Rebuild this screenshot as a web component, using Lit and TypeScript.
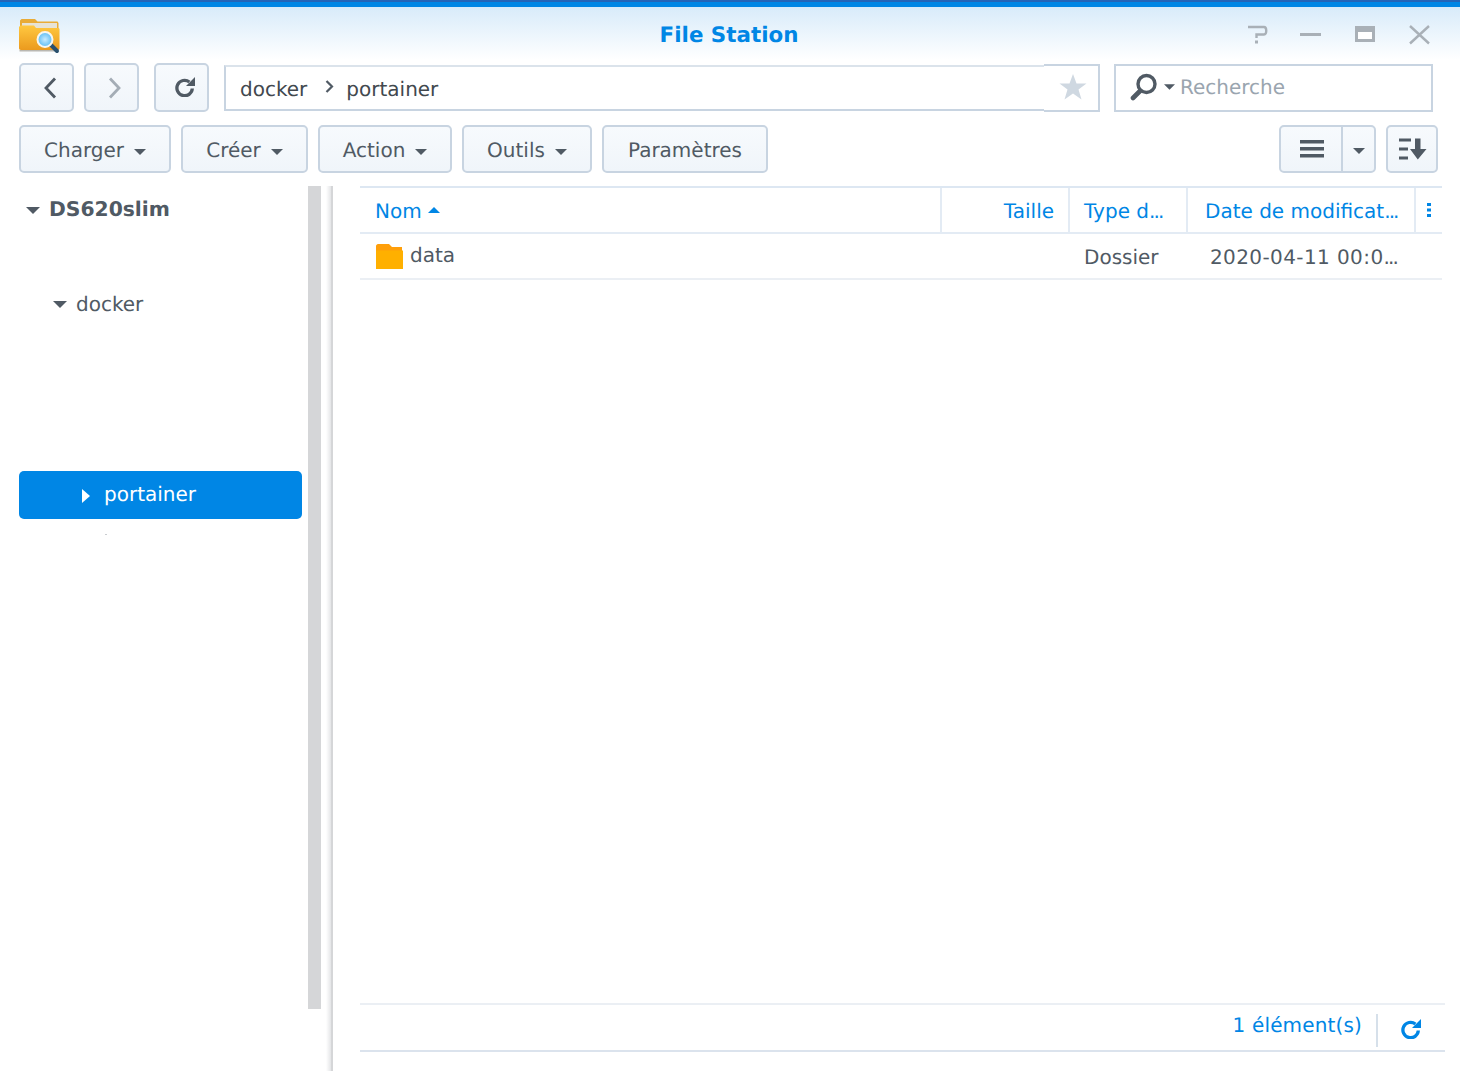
import { LitElement, html, css } from "lit";
import { customElement } from "lit/decorators.js";

const caret = () => html`<svg class="caret" width="12" height="6" viewBox="0 0 12 6"><path d="M0 0H12L6 6Z" fill="currentColor"/></svg>`;

const refresh = (color: string) => html`<svg width="20" height="20" viewBox="0 0 20 20" fill="none" style="color:${color}">
  <path d="M17.300 11.500A7.700 7.700 0 1 1 14.400 5" stroke="currentColor" stroke-width="3.300"/>
  <path d="M11 9H20V0Z" fill="currentColor"/>
</svg>`;

const dots = html`<span class="dots">...</span>`;

@customElement("app-root")
export class AppRoot extends LitElement {
  static styles = css`
    :host { display: block; width: 1460px; height: 1071px; overflow: hidden; background: #fff;
      font-family: "DejaVu Sans", sans-serif; font-size: 20px; color: #505a64; text-rendering: geometricPrecision; }
    * { box-sizing: border-box; }
    .dots { letter-spacing: -1.900px; margin-right: 2px; }
    .stripe { height: 7px; background: linear-gradient(#2565b8 0 2px, #0086e5 2px); }
    .head { background: linear-gradient(#d8ebfa, #ffffff 53px); background-repeat: no-repeat; }
    .title { height: 56px; position: relative; display: flex; justify-content: center; align-items: center;
      font-weight: 700; font-size: 21.400px; color: #0086e5; padding: 1px 2px 0 0; }
    .logo { position: absolute; left: 18px; top: 10px; }
    .winbtns { position: absolute; left: 1247px; top: 18px; display: flex; align-items: center; }
    .row { display: flex; align-items: center; padding-left: 19px; }
    .r1 { height: 49px; }
    .r2 { height: 48px; margin-top: 13px; padding-right: 22px; }
    .btn { height: 48px; background: linear-gradient(#f7fafd, #f0f5fa); border: 2px solid #c8d4e1; border-radius: 5px;
      display: flex; align-items: center; justify-content: center; color: #505a64; }
    .nav { width: 55px; height: 49px; margin-right: 10px; padding-left: 6px; }
    .nav.last { margin-left: 5px; margin-right: 15px; padding-left: 7px; padding-bottom: 1px; }
    .addr { width: 876px; height: 48px; display: flex; align-items: stretch; }
    .path { flex: 1; margin: 1px 0; border: 2px solid #c8d4e1; border-top-color: #dbe3eb; border-right: 0; background: #fff; padding-left: 14px;
      display: flex; align-items: center; color: #42484e; padding-top: 3px; }
    .path svg { margin: 0 12px 5px 18px; }
    .star { width: 56px; border: 2px solid #c8d4e1; border-left: 0; background: #fff; display: flex; align-items: center; justify-content: center; padding-left: 3px; padding-bottom: 1px; }
    .search { width: 319px; height: 48px; margin-left: 14px; border: 2px solid #c8d4e1; background: #fff;
      display: flex; align-items: center; padding: 0 0 2px 14px; color: #9aa5af; }
    .search .caret { color: #505a64; margin: 0 5px 0 6px; width: 11px; }
    .tb { padding: 2px 22px 0; gap: 10px; margin-right: 10px; white-space: nowrap; }
    .tb .caret { color: #505a64; margin-top: 3px; }
    .w-charger { width: 152px; }
    .w-creer { width: 127px; }
    .w-action { width: 134px; }
    .w-outils { width: 130px; }
    .w-param { width: 166px; }
    .spacer { flex: 1; }
    .split { width: 97px; margin-right: 10px; justify-content: flex-start; }
    .split .a { width: 62px; height: 100%; padding-left: 2px; display: flex; align-items: center; justify-content: center; border-right: 2px solid #c8d4e1; }
    .split .b { flex: 1; display: flex; align-items: center; justify-content: center; padding-top: 3px; }
    .sort { width: 52px; padding-left: 2px; }
    .main { display: flex; height: 885px; margin-top: 13px; }
    .side { width: 333px; display: flex; flex-shrink: 0; background: linear-gradient(90deg, #fff 326px, #e4e5e7 331px, #d5d6d8 331px); }
    .tree { width: 308px; padding-left: 19px; }
    .node { display: flex; align-items: center; height: 48px; }
    .node svg { flex-shrink: 0; }
    .n0 { padding: 0 0 2px 7px; font-weight: 700; height: 47px; }
    .n0 svg { margin-right: 9px; margin-top: 3px; width: 14px; height: 7px; }
    .n0 span { font-size: 20.300px; }
    .n1 { margin-top: 47px; padding-left: 34px; }
    .n1 svg { margin-right: 9px; margin-top: 1px; width: 14px; height: 7px; }
    .sel { margin-top: 143px; width: 283px; background: #0086e5; color: #fff; border-radius: 5px; padding-left: 63px; }
    .sel svg { margin-right: 14px; margin-top: 1px; }
    .sel span { margin-bottom: 3px; }
    .speck { width: 2px; height: 1px; background: #c9ccd0; margin: 15px 0 0 86px; }
    .scroll { width: 13px; height: 823px; background: #d5d6d8; }
    .content { flex: 1; padding-left: 27px; display: flex; flex-direction: column; min-width: 0; }
    .grid { display: grid; grid-template-columns: 582px 128px 118px 228px 26px; width: 1082px; }
    .thead { height: 48px; border-top: 2px solid #dde7f2; border-bottom: 2px solid #e3ebf4; color: #0086e5; }
    .thead > div { display: flex; align-items: center; padding: 2px 0 0 14px; border-right: 2px solid #e3ebf4; white-space: nowrap; }
    .thead > div:first-child { padding-left: 15px; }
    .thead > div:last-child { border-right: 0; padding: 0 0 0 11px; }
    .thead .taille { justify-content: flex-end; padding: 2px 14px 0 0; }
    .thead .date { padding-left: 17px; }
    .sortc { margin: 0 0 3px 6px; }
    .trow { height: 46px; border-bottom: 2px solid #ebeff4; }
    .trow > div { display: flex; align-items: center; padding: 1px 0 0 14px; white-space: nowrap; }
    .trow .name { gap: 7px; padding: 0 0 0 16px; }
    .trow .name span { margin-bottom: 3px; }
    .trow .date { padding-left: 22px; letter-spacing: .4px; }
    .fill { flex: 1; }
    .foot { margin-top: auto; width: 1085px; height: 49px; border-top: 2px solid #ebeff4; border-bottom: 2px solid #dbe3ed;
      display: flex; justify-content: flex-end; align-items: center; color: #0086e5; padding-right: 24px; margin-bottom: 19px; }
    .foot .count { margin-bottom: 6px; letter-spacing: .15px; }
    .foot .sep { width: 2px; height: 33px; background: #d6e0ea; margin: 6px 23px 0 14px; }
    .foot svg { margin-top: 2px; }
  `;

  render() {
    return html`
      <div class="stripe"></div>
      <div class="head">
        <div class="title">File Station
          <svg class="logo" width="44" height="44" viewBox="0 0 44 44">
            <defs>
              <linearGradient id="fg" x1="0" y1="0" x2="0" y2="1"><stop offset="0" stop-color="#ffc840"/><stop offset="1" stop-color="#eb9a1e"/></linearGradient>
              <radialGradient id="lens"><stop offset="0" stop-color="#c8ecff"/><stop offset="1" stop-color="#5cbcf4"/></radialGradient>
            </defs>
            <path d="M2 10V3.500L3.500 2H17L19.500 4.500H39.500L40.500 6V14H2Z" fill="#e9ab37"/>
            <rect x="4" y="6" width="35" height="5" fill="#e7e3d6"/>
            <path d="M1 10.500C1 9.500 2 8.500 3 8.500H16L18 11H40C41 11 41.500 11.500 41.500 12.500V31C41.500 32.500 40.500 33 39.500 33H3C1.500 33 1 32 1 31Z" fill="url(#fg)"/>
            <rect x="1.500" y="33" width="38" height="1.500" fill="#8f8a7e" opacity=".6"/>
            <path d="M33 28L39 34" stroke="#29506e" stroke-width="4" stroke-linecap="round"/>
            <circle cx="27" cy="22.500" r="7.500" fill="url(#lens)" stroke="#f6f6f0" stroke-width="2"/>
          </svg>
          <div class="winbtns">
            <svg width="22" height="20" viewBox="0 0 22 20" fill="none" stroke="#a9b0b7" stroke-width="2.400"><path d="M1 2H17C20 2 20 9.500 17 9.500H9.500V13"/><path d="M9.500 15.500V18.500" stroke-width="3"/></svg>
            <svg width="22" height="20" viewBox="0 0 22 20" style="margin-left:31px"><rect x="0" y="8" width="21" height="3" fill="#a9b0b7"/></svg>
            <svg width="20" height="20" viewBox="0 0 20 20" fill="none" style="margin-left:33px"><rect x="0" y="1" width="20" height="16" fill="#a9b0b7"/><rect x="3" y="7" width="14" height="7" fill="#fff"/></svg>
            <svg width="22" height="20" viewBox="0 0 22 20" fill="none" stroke="#a9b0b7" stroke-width="2.400" style="margin-left:34px"><path d="M1 1L20 18.500M20 1L1 18.500"/></svg>
          </div>
        </div>
        <div class="row r1">
          <div class="btn nav"><svg width="14" height="22" viewBox="0 0 14 22" fill="none" stroke="#505a64" stroke-width="2.800"><path d="M12 1.500L3 11L12 20.500"/></svg></div>
          <div class="btn nav"><svg width="14" height="22" viewBox="0 0 14 22" fill="none" stroke="#a4adb6" stroke-width="2.800"><path d="M2 1.500L11 11L2 20.500"/></svg></div>
          <div class="btn nav last">${refresh("#505a64")}</div>
          <div class="addr">
            <div class="path">docker
              <svg width="9" height="13" viewBox="0 0 9 13" fill="none" stroke="#505a64" stroke-width="2.200"><path d="M1.500 1L7 6.500L1.500 12"/></svg>
              portainer</div>
            <div class="star"><svg width="28" height="26" viewBox="0 0 28 26"><path d="M14 0L17.500 9.400H27.500L19.500 15.600L22.500 25.500L14 19.600L5.500 25.500L8.500 15.600L.5 9.400H10.500Z" fill="#cfd8e1"/></svg></div>
          </div>
          <div class="search">
            <svg width="28" height="28" viewBox="0 0 28 28" fill="none"><circle cx="16.500" cy="11" r="8.500" stroke="#505a64" stroke-width="3.400"/><path d="M10 18L3 25" stroke="#505a64" stroke-width="4.600" stroke-linecap="round"/></svg>
            ${caret()}Recherche
          </div>
        </div>
        <div class="row r2">
          <div class="btn tb w-charger">Charger${caret()}</div>
          <div class="btn tb w-creer">Créer${caret()}</div>
          <div class="btn tb w-action">Action${caret()}</div>
          <div class="btn tb w-outils">Outils${caret()}</div>
          <div class="btn tb w-param">Paramètres</div>
          <div class="spacer"></div>
          <div class="btn split">
            <div class="a"><svg width="24" height="18" viewBox="0 0 24 18"><path d="M0 0H24V3.500H0ZM0 7H24V10.500H0ZM0 14H24V17.500H0Z" fill="#505a64"/></svg></div>
            <div class="b">${caret()}</div>
          </div>
          <div class="btn sort"><svg width="28" height="22" viewBox="0 0 28 22"><path d="M0 .5H12V3.500H0ZM0 9.500H9V12.500H0ZM0 18.500H9V21.500H0Z" fill="#505a64"/><path d="M16 .5H21.500V11H27.500L18.800 21.500L11 11H16Z" fill="#505a64"/></svg></div>
        </div>
      </div>
      <div class="main">
        <div class="side">
          <div class="tree">
            <div class="node n0">${caret()}<span>DS620slim</span></div>
            <div class="node n1">${caret()}docker</div>
            <div class="node sel"><svg width="8" height="14" viewBox="0 0 8 14"><path d="M0 0L8 7L0 14Z" fill="#fff"/></svg><span>portainer</span></div>
            <div class="speck"></div>
          </div>
          <div class="scroll"></div>
        </div>
        <div class="content">
          <div class="grid thead">
            <div>Nom<svg class="sortc" width="12" height="6" viewBox="0 0 12 6"><path d="M6 0L12 6H0Z" fill="#0086e5"/></svg></div>
            <div class="taille">Taille</div>
            <div>Type d${dots}</div>
            <div class="date">Date de modificat${dots}</div>
            <div><svg width="4" height="14" viewBox="0 0 4 14"><path d="M0 0H4V3H0ZM0 5.500H4V8.500H0ZM0 11H4V14H0Z" fill="#0086e5"/></svg></div>
          </div>
          <div class="grid trow">
            <div class="name">
              <svg width="27" height="25" viewBox="0 0 27 25"><path d="M0 2C0 1 1 0 2 0H13L16 3H26V7H0Z" fill="#ff9f0a"/><path d="M0 6.500H27V25H0Z" fill="#ffb000"/></svg>
              <span>data</span></div>
            <div></div>
            <div>Dossier</div>
            <div class="date">2020-04-11 00:0${dots}</div>
            <div></div>
          </div>
          <div class="fill"></div>
          <div class="foot">
            <span class="count">1 élément(s)</span>
            <span class="sep"></span>
            ${refresh("#0086e5")}
          </div>
        </div>
      </div>
    `;
  }
}
